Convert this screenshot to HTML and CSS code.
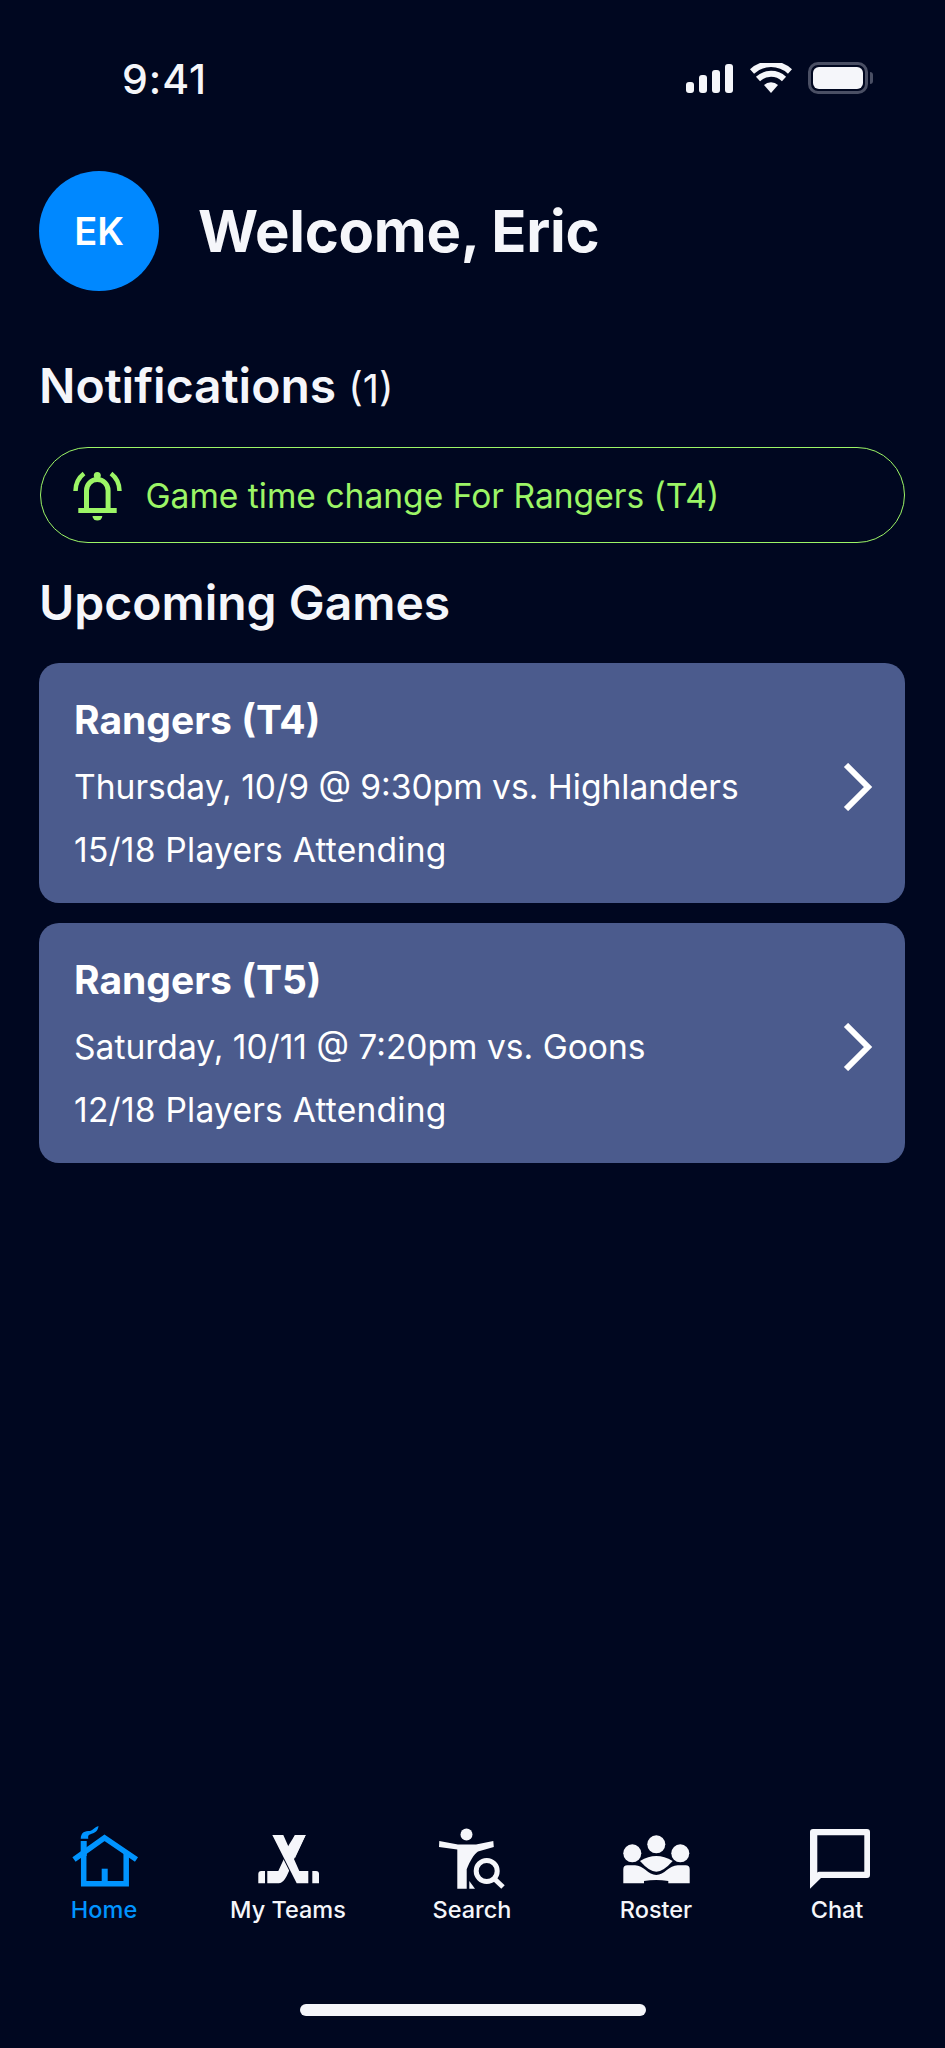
FILE: index.html
```html
<!DOCTYPE html>
<html lang="en">
<head>
  <meta charset="UTF-8">
  <title>Home</title>
  <meta name="viewport" content="width=device-width, initial-scale=1">
  <link rel="stylesheet" href="styles.css">
</head>
<body>

  <div class="status-bar">
    <span class="clock">9:41</span>
    <div class="status-icons">
      <svg width="48" height="30" viewBox="0 0 48 30">
        <rect x="0" y="19" width="8" height="11" rx="3"/>
        <rect x="13" y="12" width="8" height="18" rx="3"/>
        <rect x="26" y="7" width="8" height="23" rx="3"/>
        <rect x="39" y="1" width="8" height="29" rx="3"/>
      </svg>
      <svg width="42" height="30" viewBox="0 0 42 30">
        <path d="M21 30l-7-8a10 10 0 0 1 14 0z"/>
        <path class="arc" d="M8 16a19 19 0 0 1 26 0"/>
        <path class="arc" d="M2 8.500a28 28 0 0 1 38 0"/>
      </svg>
      <div class="battery"><div class="battery-fill"></div></div>
    </div>
  </div>

  <header class="welcome">
    <div class="avatar">EK</div>
    <h1>Welcome, Eric</h1>
  </header>

  <h2 class="section-title">Notifications <span class="count">(1)</span></h2>
  <div class="notice">
    <svg width="52" height="56" viewBox="0 0 52 56">
      <path class="bell" d="M15.500 43V23.500a10.800 11 0 0 1 21.600 0V43"/>
      <path class="bell" d="M7.300 43.500h38.400"/>
      <circle cx="26.300" cy="8.500" r="3.500"/>
      <path d="M21.500 49h9.800a4.900 4.500 0 0 1-9.800 0z"/>
      <path class="bell thin" d="M4.500 24a22 22 0 0 1 8.500-17.500"/>
      <path class="bell thin" d="M48.500 24a22 22 0 0 0-8.500-17.500"/>
    </svg>
    <span>Game time change For Rangers (T4)</span>
  </div>

  <h2 class="section-title upcoming">Upcoming Games</h2>

  <div class="game-card">
    <div class="game-info">
      <h3>Rangers (T4)</h3>
      <p>Thursday, 10/9 @ 9:30pm vs. Highlanders</p>
      <p class="attending">15/18 Players Attending</p>
    </div>
    <svg class="chevron" width="30" height="48" viewBox="0 0 30 48"><path d="M3 2l22 22L3 46"/></svg>
  </div>

  <div class="game-card">
    <div class="game-info">
      <h3>Rangers (T5)</h3>
      <p>Saturday, 10/11 @ 7:20pm vs. Goons</p>
      <p class="attending">12/18 Players Attending</p>
    </div>
    <svg class="chevron" width="30" height="48" viewBox="0 0 30 48"><path d="M3 2l22 22L3 46"/></svg>
  </div>

  <nav class="tab-bar">
    <div class="tab active">
      <svg width="100" height="70" viewBox="0 0 100 70">
        <path class="line" d="M20 36.500L50.500 14.800 82.500 36.500"/>
        <path class="line" d="M29.700 30V60.800H72.200V30"/>
        <rect x="47.700" y="45.700" width="6" height="13"/>
        <rect x="26.700" y="18" width="6" height="15"/>
        <path d="M26.700 15.700C27 9 31 8 36 8C39 7 41 4 44.500 3C44 8 41 10 37 11C34 12 34 13 34.300 15.700z"/>
      </svg>
      <span>Home</span>
    </div>
    <div class="tab">
      <svg width="100" height="70" viewBox="0 0 100 70">
        <path d="M57 12H67.700L48.700 53Q45 60.300 41 60.300H29.300V48H40.300z"/>
        <path class="front" d="M34.300 12H45.300L61.300 48H70.300V60.300H58.700z"/>
        <path d="M57 12H67.700L55.500 37 49 25z"/>
        <path d="M20.300 51a3 3 0 0 1 3-3H27V60.300H20.300z"/>
        <path d="M74.300 48H78a3 3 0 0 1 3 3V60.300H74.300z"/>
      </svg>
      <span>My Teams</span>
    </div>
    <div class="tab">
      <svg width="100" height="70" viewBox="0 0 100 70">
        <circle cx="44.500" cy="11.500" r="6"/>
        <path d="M17.300 18L36 21.500H54L71.300 18L71.800 24L56 28.500C52 31 48 38 44.700 46.300V65.700H35.300V26.500L17 24z"/>
        <path d="M47.300 58L53 65.700H47.300z"/>
        <circle class="lens" cx="64.700" cy="48" r="10.500"/>
        <path class="lens" d="M72 55.500L81 64"/>
      </svg>
      <span>Search</span>
    </div>
    <div class="tab">
      <svg width="100" height="70" viewBox="0 0 100 70">
        <circle cx="50.300" cy="21.300" r="9"/>
        <circle cx="26.300" cy="30.300" r="9"/>
        <circle cx="74.300" cy="30.300" r="9"/>
        <path d="M17.300 60.300V46.300Q17.300 42.300 21.300 42.300H29C37.300 42.300 42.300 52 50.300 52C58.300 52 63.300 42.300 71.700 42.300H79.700Q83.700 42.300 83.700 46.300V60.300H62.300V58Q55.700 57 50.300 57Q44 57 38 58V60.300z"/>
        <path d="M34 38Q42.300 33 50.300 33Q58.300 33 66.700 38Q57.300 48.700 50.300 48.700Q43.300 48.700 34 38z"/>
      </svg>
      <span>Roster</span>
    </div>
    <div class="tab">
      <svg width="100" height="70" viewBox="0 0 100 70">
        <path fill-rule="evenodd" d="M20 65.700V9a3 3 0 0 1 3-3h54a3 3 0 0 1 3 3v43a3 3 0 0 1-3 3H31zM27.300 12.300V49.500L28.800 48.700H74.300V12.300z"/>
      </svg>
      <span>Chat</span>
    </div>
  </nav>

  <div class="home-bar"></div>

</body>
</html>
```

FILE: styles.css
```css
* { margin: 0; padding: 0; box-sizing: border-box; }
body {
  width: 945px;
  height: 2048px;
  background: #000720;
  color: #f5f6fa;
  font-family: 'Inter', sans-serif;
  display: flex;
  flex-direction: column;
  overflow: hidden;
}

.status-bar {
  height: 171px;
  padding: 58px 77px 0 122px;
  display: flex;
  justify-content: space-between;
  align-items: flex-start;
}
.clock { font-size: 41px; font-weight: 500; line-height: 42px; letter-spacing: 1px; }
.status-icons { display: flex; align-items: center; gap: 16px; height: 40px; }
.status-icons svg { fill: #f5f6fa; }
.status-icons .arc { fill: none; stroke: #f5f6fa; stroke-width: 6; }
.battery {
  position: relative;
  width: 60px;
  height: 32px;
  border: 3px solid #4a4f64;
  border-radius: 10px;
  padding: 2px;
}
.battery::after {
  content: "";
  position: absolute;
  right: -8px;
  top: 7px;
  width: 3px;
  height: 12px;
  background: #4a4f64;
  border-radius: 0 3px 3px 0;
}
.battery-fill { height: 100%; background: #f5f6fa; border-radius: 6px; }

.welcome { display: flex; align-items: center; gap: 39px; padding-left: 39px; height: 120px; }
.avatar {
  width: 120px;
  height: 120px;
  border-radius: 50%;
  background: #0088ff;
  display: flex;
  align-items: center;
  justify-content: center;
  font-size: 38px;
  font-weight: 600;
  color: #fff;
}
h1 { font-size: 58px; font-weight: 700; letter-spacing: -0.3px; }

.section-title { font-size: 48px; font-weight: 600; margin-left: 39px; line-height: 56px; }
.section-title .count { font-size: 40px; font-weight: 400; }
.welcome + .section-title { margin-top: 67px; }

.notice {
  margin: 30px 40px 0 40px;
  height: 96px;
  border: 1.5px solid #9cf566;
  border-radius: 48px;
  display: flex;
  align-items: center;
  gap: 23px;
  padding-left: 29.5px;
  color: #9cf566;
  font-size: 33.6px;
}
.notice span { padding-top: 1px; }
.notice svg { fill: #9cf566; flex: none; }
.notice .bell { fill: none; stroke: #9cf566; stroke-width: 5; }
.notice .bell.thin { stroke-width: 4.5; }

.upcoming { margin-top: 32px; margin-bottom: 32px; }

.game-card {
  margin: 0 40px 20px 39px;
  height: 240px;
  background: #4b5b8d;
  border-radius: 20px;
  padding: 34px 32px 0 35px;
  display: flex;
  justify-content: space-between;
  align-items: center;
  flex: none;
}
.game-info { align-self: flex-start; }
.game-info h3 { font-size: 39px; font-weight: 700; line-height: 46px; margin-bottom: 24px; color: #fff; }
.game-info p { font-size: 33.6px; line-height: 40px; margin-bottom: 23px; color: #fff; }
.game-info .attending { letter-spacing: 0.22px; }
.chevron { fill: none; stroke: #fff; stroke-width: 6; margin-top: -26px; }

.tab-bar {
  margin-top: auto;
  padding: 0 12px;
  display: grid;
  grid-template-columns: repeat(5, 184px);
}
.tab {
  display: flex;
  flex-direction: column;
  align-items: center;
  font-size: 23.5px;
  font-weight: 500;
  line-height: 30px;
  gap: 2px;
  fill: #f5f6fa;
}
.tab:last-child span { margin-right: 6px; }
.tab.active { color: #0094ff; fill: #0094ff; }
.tab.active .line { fill: none; stroke: #0094ff; stroke-width: 5.5; }
.tab .front { stroke: #000720; stroke-width: 2; paint-order: stroke; }
.tab .lens { fill: none; stroke: #f5f6fa; stroke-width: 5; }

.home-bar {
  width: 346px;
  height: 12px;
  margin: 79px auto 32px;
  background: #f5f6fa;
  border-radius: 6px;
  flex: none;
}
```
